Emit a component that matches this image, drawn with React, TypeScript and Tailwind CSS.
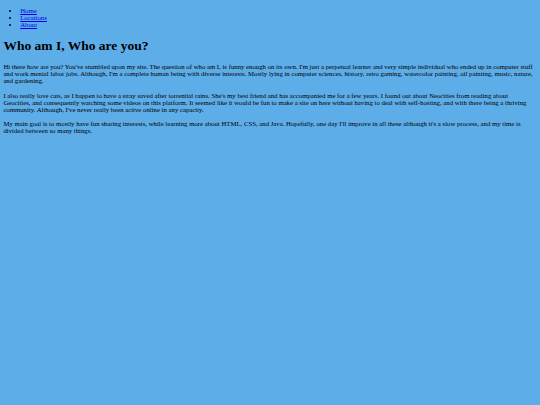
export default function App() {
  return (
    <div className="min-h-screen bg-[#5dade9] text-black font-['Liberation_Serif','Times_New_Roman',serif]">
      <div className="[zoom:0.421875] px-2 pt-4 pb-2 text-[16px] leading-[normal]">
        <ul className="list-disc pl-10 mt-0 mb-4">
          <li><a href="#" className="text-[#0000ee] underline">Home</a></li>
          <li><a href="#" className="text-[#0000ee] underline">Locations</a></li>
          <li><a href="#" className="text-[#0000ee] underline">About</a></li>
        </ul>
        <h1 className="text-[32px] font-bold mt-[24px] mb-[21.44px]">Who am I, Who are you?</h1>
        <p className="my-[18px]">
          Hi there how are you? You've stumbled upon my site. The question of who am I, is funny enough on its own. I'm just a perpetual learner and very simple individual who ended up in computer stuff and work menial labor jobs. Although, I'm a complete human being with diverse interests. Mostly lying in computer sciences, history, retro gaming, watercolor painting, oil painting, music, nature, and gardening.
        </p>
        <p className="my-[18px]">
          I also really love cats, as I happen to have a stray saved after torrential rains. She's my best friend and has accompanied me for a few years. I found out about Neocities from reading about Geocities, and consequently watching some videos on this platform. It seemed like it would be fun to make a site on here without having to deal with self-hosting, and with there being a thriving community. Although, I've never really been active online in any capacity.
        </p>
        <p className="my-[18px]">
          My main goal is to mostly have fun sharing interests, while learning more about HTML, CSS, and Java. Hopefully, one day I'll improve in all these although it's a slow process, and my time is divided between so many things.
        </p>
      </div>
    </div>
  );
}
